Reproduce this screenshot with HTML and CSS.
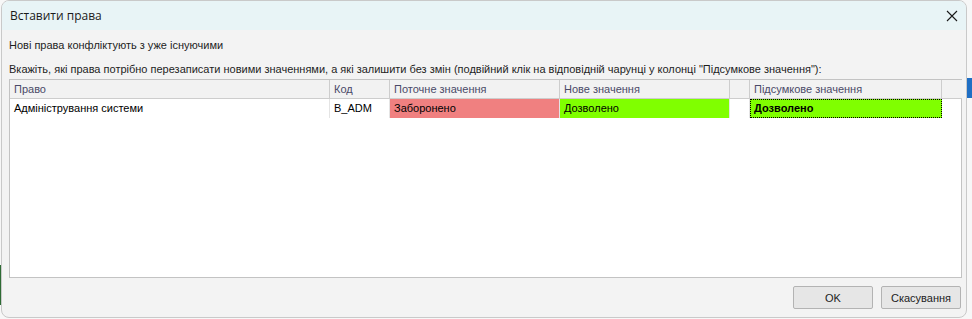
FILE: index.html
```html
<!DOCTYPE html>
<html lang="uk">
<head>
    <meta charset="UTF-8">
    <link rel="stylesheet" href="styles.css">
</head>
<body>
    <!-- Dialog -->
    <div class="dialog">
        <div class="titlebar">
            <span class="title">Вставити права</span>
            <svg class="close" width="12" height="12" viewBox="0 0 12 12">
                <path d="M1 1 L11 11 M11 1 L1 11" stroke="#1a1a1a" stroke-width="1.1" fill="none"/>
            </svg>
        </div>

        <div class="content">
            <p class="msg">Нові права конфліктують з уже існуючими</p>
            <p class="hint">Вкажіть, які права потрібно перезаписати новими значеннями, а які залишити без змін (подвійний клік на відповідній чарунці у колонці "Підсумкове значення"):</p>

            <div class="grid">
                <div class="head">Право</div>
                <div class="head">Код</div>
                <div class="head">Поточне значення</div>
                <div class="head">Нове значення</div>
                <div class="head"></div>
                <div class="head">Підсумкове значення</div>
                <div class="head last"></div>

                <div class="cell">Адміністрування системи</div>
                <div class="cell">B_ADM</div>
                <div class="cell denied">Заборонено</div>
                <div class="cell allowed">Дозволено</div>
                <div class="cell"></div>
                <div class="cell allowed result">Дозволено</div>
                <div class="cell last"></div>
            </div>

            <div class="buttons">
                <button class="btn">OK</button>
                <button class="btn">Скасування</button>
            </div>
        </div>
    </div>
</body>
</html>
```

FILE: styles.css
```css
/* Reset */
* {
    margin: 0;
    padding: 0;
    box-sizing: border-box;
}

body {
    font-family: "Liberation Sans", Arial, sans-serif;
    font-size: 11px;
    color: #1e1e1e;
    background:
        linear-gradient(to bottom, transparent 265px, #2e6b34 265px, #2e6b34 305px, transparent 305px) left / 2px 100% no-repeat,
        linear-gradient(to bottom, transparent 78px, #1f6fc4 78px, #1f6fc4 98px, transparent 98px) right / 5px 100% no-repeat,
        #f7f7f7;
}

/* Dialog */
.dialog {
    margin-left: 1px;
    width: 966px;
    height: 318px;
    background-color: #f3f3f3;
    border: 1px solid #c9c9c9;
    border-radius: 8px;
    overflow: hidden;
    display: flex;
    flex-direction: column;
}

.titlebar {
    height: 29px;
    background-color: #e8f4f6;
    display: flex;
    align-items: center;
    justify-content: space-between;
    padding: 0 7px 0 8px;
}

.title {
    font-family: "Open Sans", "Liberation Sans", sans-serif;
    font-size: 12px;
    color: #1a1a1a;
}

.close {
    margin-right: 1px;
}

.content {
    padding: 8px 4px 0 7px;
    display: flex;
    flex-direction: column;
}

.msg {
    line-height: 14px;
}

.hint {
    margin-top: 10px;
    line-height: 14px;
    height: 17px;
}

/* Grid */
.grid {
    height: 199px;
    background-color: #fff;
    border: 1px solid #c3c3c3;
    display: grid;
    grid-template-columns: 320px 60px 170px 170px 20px 192px 20px;
    grid-template-rows: 19px 19px;
    align-content: start;
}

.head {
    background-color: #f2f2f2;
    color: #4a4a68;
    border-right: 1px solid #cdcdcd;
    border-bottom: 1px solid #cdcdcd;
    padding: 0 4px;
    line-height: 18px;
    white-space: nowrap;
}

.head.last {
    border-right: none;
}

.cell {
    color: #000;
    border-right: 1px solid #e4e4e4;
    padding: 0 4px;
    line-height: 18px;
    white-space: nowrap;
}

.cell.last {
    border-right: none;
}

.denied {
    background-color: #f08080;
}

.allowed {
    background-color: #80ff00;
}

.result {
    font-weight: bold;
    border: 1px dotted #000;
    line-height: 16px;
    padding-left: 3px;
}

/* Buttons */
.buttons {
    margin-top: 8px;
    display: flex;
    justify-content: flex-end;
    gap: 8px;
    padding-right: 1px;
}

.btn {
    width: 80px;
    height: 23px;
    font-family: "Liberation Sans", Arial, sans-serif;
    font-size: 11px;
    color: #222;
    background-color: #e6e6e6;
    border: 1px solid #b3b3b3;
    border-radius: 2px;
}
```
